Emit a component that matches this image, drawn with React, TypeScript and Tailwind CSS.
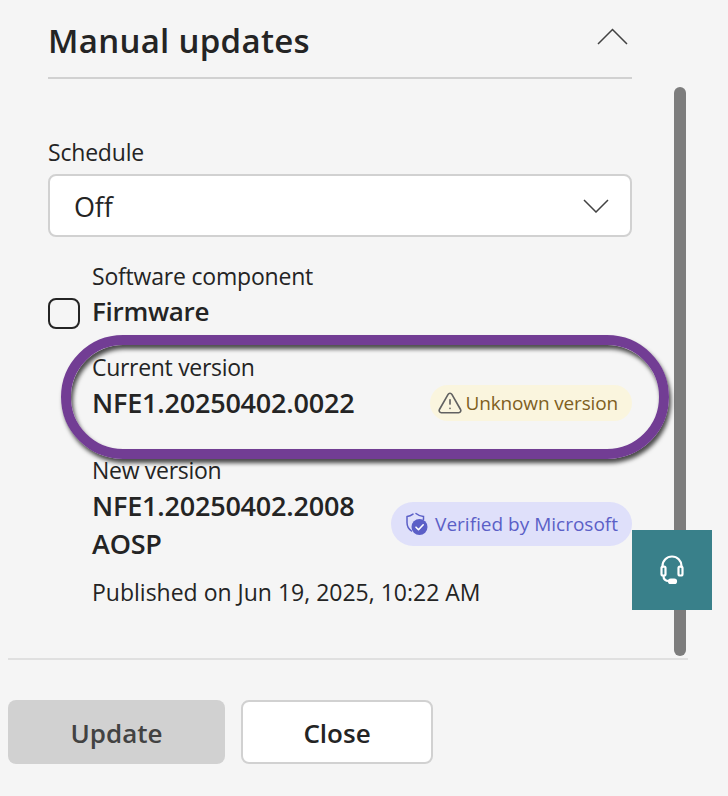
import { TriangleAlert } from 'lucide-react'

function ShieldCheck() {
  return (
    <svg width="26" height="26" viewBox="0 0 26 26" fill="none">
      <path d="M12 2.500c2.200 1.800 4.600 2.800 7.500 3v3M3 5.500c2-.2 4-.9 6-2.400M3 5.500v6c0 3.800 1.500 6.500 4.500 8.500" stroke="#5b5fc7" strokeWidth="1.500" strokeLinecap="round" />
      <circle cx="15.500" cy="16" r="8" fill="#5b5fc7" />
      <path d="M12 16.200l2.500 2.500 4.700-4.900" stroke="#fff" strokeWidth="1.600" strokeLinecap="round" strokeLinejoin="round" />
    </svg>
  )
}

function Headset() {
  return (
    <svg width="24" height="30" viewBox="0 0 24 30" fill="none" stroke="#fff" strokeWidth="2.200">
      <path d="M2.500 13v-2a9.500 9.500 0 0 1 19 0v2" />
      <rect x="1.500" y="11.500" width="4" height="9" rx="1.500" />
      <rect x="18.500" y="11.500" width="4" height="9" rx="1.500" />
      <path d="M3.500 21c0 3 2 5 5.500 5" />
      <rect x="9" y="24.500" width="7" height="3.500" rx="1.750" fill="#fff" />
    </svg>
  )
}

export default function App() {
  return (
    <div className="relative w-[728px] h-[796px] overflow-hidden bg-[#f5f5f5] text-[#242424] font-['Open_Sans','Noto_Sans',sans-serif]">
      <div className="ml-[48px] w-[584px]">
        {/* Section header */}
        <div className="flex items-center justify-between h-[79px] border-b-2 border-[#d1d1d1]">
          <h2 className="pt-[4px] text-[33px] font-semibold tracking-[0.3px] leading-[40px]">Manual updates</h2>
          <svg width="31" height="17" viewBox="0 0 31 17" fill="none" stroke="#424242" strokeWidth="1.500" className="mr-[4px] -mt-[4px]">
            <path d="M1 16L15.500 1.500 30 16" />
          </svg>
        </div>

        <p className="mt-[59px] text-[23px] leading-[28px] tracking-[-0.2px]">Schedule</p>
        <div className="mt-[8px] flex items-center justify-between h-[63px] bg-white border-2 border-[#d1d1d1] rounded-lg pl-[24px] pr-[21px]">
          <span className="pt-[4px] text-[27px] tracking-[-0.2px]">Off</span>
          <svg width="26" height="14" viewBox="0 0 26 14" fill="none" stroke="#424242" strokeWidth="1.500">
            <path d="M1 1l12 12L25 1" />
          </svg>
        </div>

        {/* Firmware row */}
        <div className="mt-[25px] flex gap-[12px]">
          <div className="mt-[36px] w-[32px] h-[31px] shrink-0 border-2 border-[#242424] rounded-lg" />
          <div className="flex-1">
            <p className="text-[23px] leading-[28px] tracking-[-0.2px]">Software component</p>
            <p className="mt-[5px] text-[26px] leading-[32px] font-semibold tracking-[-0.3px]">Firmware</p>

            <p className="mt-[26px] text-[23px] leading-[28px] tracking-[-0.3px]">Current version</p>
            <div className="flex items-center justify-between mt-[4px]">
              <p className="text-[27px] leading-[30px] font-semibold tracking-[-0.2px]">NFE1.20250402.0022</p>
              <div className="flex items-center h-[36px] pl-[7px] pr-[14px] rounded-full bg-[#faf5de] text-[#7f5f1e] text-[19px] tracking-[-0.15px]">
                <TriangleAlert className="w-[26px] h-[26px] mr-[3px] text-[#616161]" strokeWidth={1.500} />
                Unknown version
              </div>
            </div>

            <p className="mt-[35px] text-[23px] leading-[28px] tracking-[-0.3px]">New version</p>
            <div className="flex items-start justify-between mt-[3px]">
              <p className="text-[27px] leading-[38px] font-semibold tracking-[-0.2px]">NFE1.20250402.2008<br />AOSP</p>
              <div className="flex items-center h-[44px] mt-[15px] pl-[13px] pr-[14px] rounded-full bg-[#dfe0fa] text-[#5b5fc7] text-[19px]">
                <ShieldCheck />
                <span className="ml-[5px]">Verified by Microsoft</span>
              </div>
            </div>
            <p className="mt-[15px] text-[23px] leading-[28px]">Published on Jun 19, 2025, 10:22 AM</p>
          </div>
        </div>
      </div>

      {/* Footer */}
      <div className="ml-[8px] mr-[40px] mt-[52px] border-t-2 border-[#e0e0e0] pt-[40px] flex gap-[16px]">
        <button className="w-[217px] h-[64px] pt-[2px] rounded-lg bg-[#d1d1d1] text-[#424242] text-[26px] font-semibold">Update</button>
        <button className="w-[192px] h-[64px] pt-[2px] rounded-lg bg-white border-2 border-[#d1d1d1] text-[26px] font-semibold">Close</button>
      </div>

      {/* Scrollbar */}
      <div className="absolute left-[674px] top-[87px] w-[12px] h-[569px] rounded-full bg-[#7d7d7d]" />

      {/* Annotation */}
      <div className="absolute left-[61px] top-[335px] w-[608px] h-[124px] rounded-[62px] border-[10px] border-[#723d94] shadow-[2px_4px_4px_rgba(0,0,0,0.7),inset_2px_4px_4px_rgba(0,0,0,0.7)]" />

      {/* Support button */}
      <div className="absolute left-[632px] top-[530px] w-[80px] h-[80px] flex items-center justify-center bg-[#39808a]">
        <Headset />
      </div>
    </div>
  )
}
